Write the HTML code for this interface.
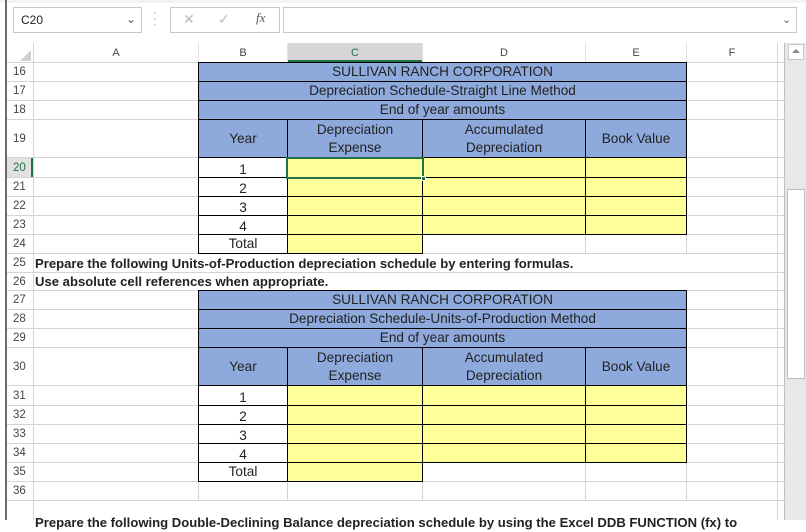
<!DOCTYPE html>
<html><head><meta charset="utf-8">
<style>
*{margin:0;padding:0;box-sizing:border-box}
body{width:806px;height:520px;overflow:hidden;background:#fff;font-family:"Liberation Sans",sans-serif;position:relative;color:#222}
.a{position:absolute}
.v{position:absolute;width:1px;background:#d4d4d4}
.h{position:absolute;height:1px;background:#d4d4d4}
.c{position:absolute;border:1px solid #000;display:flex;align-items:center;justify-content:center;text-align:center;font-size:13.6px;line-height:18px;color:#222;white-space:nowrap}
.b{background:#8ea9db}
.y{background:#ffff99}
.w{background:#fff}
.rn{position:absolute;left:8px;width:25px;font-size:11.5px;color:#444;padding-left:5px;display:flex;align-items:center}
.ch{position:absolute;top:43px;height:19px;font-size:11px;color:#444;display:flex;align-items:center;justify-content:center}
.bt{position:absolute;left:35px;font-size:13.1px;font-weight:bold;line-height:18px;color:#222;white-space:nowrap}
</style></head><body>
<div class="a" style="left:0;top:0;width:806px;height:3px;background:#f3f3f3"></div>
<div class="a" style="left:5px;top:0;width:2px;height:520px;background:#6b6b6b"></div>
<div class="a" style="left:13px;top:7px;width:129px;height:26px;border:1px solid #c6c6c6;font-size:12px;padding:5px 0 0 7px;color:#222">C20</div>
<div class="a" style="left:126px;top:12px;font-size:12px;color:#555">&#8964;</div>
<div class="a" style="left:153px;top:10px;font-size:11px;color:#999;line-height:6px">&middot;<br>&middot;<br>&middot;</div>
<div class="a" style="left:170px;top:7px;width:110px;height:26px;border:1px solid #c6c6c6"></div>
<div class="a" style="left:183px;top:11px;font-size:14px;color:#bbb">&#10005;</div>
<div class="a" style="left:218px;top:11px;font-size:14px;color:#bbb">&#10003;</div>
<div class="a" style="left:256px;top:10px;font-size:13px;color:#555;font-family:'Liberation Serif',serif;font-style:italic">fx</div>
<div class="a" style="left:283px;top:7px;width:514px;height:26px;border:1px solid #c6c6c6"></div>
<div class="a" style="left:782px;top:13px;font-size:11px;color:#666">&#8964;</div>

<div class="a" style="left:7px;top:43px;width:778px;height:20px;background:#fff;border-bottom:1px solid #d4d4d4"></div>
<div class="a" style="left:287px;top:43px;width:136px;height:19px;background:#d6d6d6;border-bottom:2px solid #217346"></div>
<div class="a" style="left:20px;top:50px;width:0;height:0;border-left:11px solid transparent;border-bottom:11px solid #d0d0d0"></div>
<div class="ch" style="left:34px;width:164px">A</div>
<div class="ch" style="left:199px;width:88px">B</div>
<div class="ch" style="left:288px;width:134px;color:#217346">C</div>
<div class="ch" style="left:423px;width:162px">D</div>
<div class="ch" style="left:586px;width:100px">E</div>
<div class="ch" style="left:687px;width:90px">F</div>
<div class="v" style="left:33px;top:43px;height:477px"></div>
<div class="v" style="left:198px;top:43px;height:20px;background:#e2e2e2"></div>
<div class="v" style="left:287px;top:43px;height:20px;background:#e2e2e2"></div>
<div class="v" style="left:422px;top:43px;height:20px;background:#e2e2e2"></div>
<div class="v" style="left:585px;top:43px;height:20px;background:#e2e2e2"></div>
<div class="v" style="left:686px;top:43px;height:20px;background:#e2e2e2"></div>
<div class="v" style="left:777px;top:43px;height:477px"></div>
<div class="v" style="left:784px;top:43px;height:477px;background:#bdbdbd"></div>

<div class="v" style="left:198px;top:62px;height:458px"></div>
<div class="v" style="left:287px;top:62px;height:458px"></div>
<div class="v" style="left:422px;top:62px;height:458px"></div>
<div class="v" style="left:585px;top:62px;height:458px"></div>
<div class="v" style="left:686px;top:62px;height:458px"></div>

<div class="h" style="left:7px;top:81px;width:778px"></div>
<div class="h" style="left:7px;top:100px;width:778px"></div>
<div class="h" style="left:7px;top:119px;width:778px"></div>
<div class="h" style="left:7px;top:157px;width:778px"></div>
<div class="h" style="left:7px;top:177px;width:778px"></div>
<div class="h" style="left:7px;top:196px;width:778px"></div>
<div class="h" style="left:7px;top:215px;width:778px"></div>
<div class="h" style="left:7px;top:234px;width:778px"></div>
<div class="h" style="left:7px;top:253px;width:778px"></div>
<div class="h" style="left:7px;top:272px;width:778px"></div>
<div class="h" style="left:7px;top:290px;width:778px"></div>
<div class="h" style="left:7px;top:309px;width:778px"></div>
<div class="h" style="left:7px;top:328px;width:778px"></div>
<div class="h" style="left:7px;top:347px;width:778px"></div>
<div class="h" style="left:7px;top:385px;width:778px"></div>
<div class="h" style="left:7px;top:405px;width:778px"></div>
<div class="h" style="left:7px;top:424px;width:778px"></div>
<div class="h" style="left:7px;top:443px;width:778px"></div>
<div class="h" style="left:7px;top:462px;width:778px"></div>
<div class="h" style="left:7px;top:481px;width:778px"></div>
<div class="h" style="left:7px;top:500px;width:778px"></div>

<div class="rn" style="top:63px;height:18px">16</div>
<div class="rn" style="top:82px;height:18px">17</div>
<div class="rn" style="top:101px;height:18px">18</div>
<div class="rn" style="top:120px;height:37px">19</div>
<div class="a" style="left:7px;top:158px;width:26px;height:19px;background:#e1e1e1;border-right:2px solid #217346"></div>
<div class="rn" style="top:158px;height:19px;color:#217346">20</div>
<div class="rn" style="top:178px;height:18px">21</div>
<div class="rn" style="top:197px;height:18px">22</div>
<div class="rn" style="top:216px;height:18px">23</div>
<div class="rn" style="top:235px;height:18px">24</div>
<div class="rn" style="top:254px;height:18px">25</div>
<div class="rn" style="top:273px;height:17px">26</div>
<div class="rn" style="top:291px;height:18px">27</div>
<div class="rn" style="top:310px;height:18px">28</div>
<div class="rn" style="top:329px;height:18px">29</div>
<div class="rn" style="top:348px;height:37px">30</div>
<div class="rn" style="top:386px;height:19px">31</div>
<div class="rn" style="top:406px;height:18px">32</div>
<div class="rn" style="top:425px;height:18px">33</div>
<div class="rn" style="top:444px;height:18px">34</div>
<div class="rn" style="top:463px;height:18px">35</div>
<div class="rn" style="top:482px;height:18px">36</div>

<div class="c b" style="left:198px;top:62px;width:489px;height:20px">SULLIVAN RANCH CORPORATION</div>
<div class="c b" style="left:198px;top:81px;width:489px;height:20px">Depreciation Schedule-Straight Line Method</div>
<div class="c b" style="left:198px;top:100px;width:489px;height:20px">End of year amounts</div>
<div class="c b" style="left:198px;top:119px;width:90px;height:39px">Year</div>
<div class="c b" style="left:287px;top:119px;width:136px;height:39px">Depreciation<br>Expense</div>
<div class="c b" style="left:422px;top:119px;width:164px;height:39px">Accumulated<br>Depreciation</div>
<div class="c b" style="left:585px;top:119px;width:102px;height:39px">Book Value</div>
<div class="c w" style="left:198px;top:157px;width:90px;height:21px;padding-top:4px">1</div>
<div class="c y" style="left:287px;top:157px;width:136px;height:21px"></div>
<div class="c y" style="left:422px;top:157px;width:164px;height:21px"></div>
<div class="c y" style="left:585px;top:157px;width:102px;height:21px"></div>
<div class="c w" style="left:198px;top:177px;width:90px;height:20px;padding-top:4px">2</div>
<div class="c y" style="left:287px;top:177px;width:136px;height:20px"></div>
<div class="c y" style="left:422px;top:177px;width:164px;height:20px"></div>
<div class="c y" style="left:585px;top:177px;width:102px;height:20px"></div>
<div class="c w" style="left:198px;top:196px;width:90px;height:20px;padding-top:4px">3</div>
<div class="c y" style="left:287px;top:196px;width:136px;height:20px"></div>
<div class="c y" style="left:422px;top:196px;width:164px;height:20px"></div>
<div class="c y" style="left:585px;top:196px;width:102px;height:20px"></div>
<div class="c w" style="left:198px;top:215px;width:90px;height:20px;padding-top:4px">4</div>
<div class="c y" style="left:287px;top:215px;width:136px;height:20px"></div>
<div class="c y" style="left:422px;top:215px;width:164px;height:20px"></div>
<div class="c y" style="left:585px;top:215px;width:102px;height:20px"></div>
<div class="c w" style="left:198px;top:234px;width:90px;height:20px">Total</div>
<div class="c y" style="left:287px;top:234px;width:136px;height:20px"></div>
<div class="a" style="left:286px;top:157px;width:138px;height:22px;border:2px solid #217346"></div>
<div class="a" style="left:421px;top:176px;width:5px;height:5px;background:#217346;border:1px solid #fff"></div>

<div class="a" style="left:34px;top:254px;width:743px;height:18px;background:#fff"></div>
<div class="a" style="left:34px;top:273px;width:743px;height:17px;background:#fff"></div>
<div class="bt" style="top:255px">Prepare the following Units-of-Production depreciation schedule by entering formulas.</div>
<div class="bt" style="top:273px">Use absolute cell references when appropriate.</div>

<div class="c b" style="left:198px;top:290px;width:489px;height:20px">SULLIVAN RANCH CORPORATION</div>
<div class="c b" style="left:198px;top:309px;width:489px;height:20px">Depreciation Schedule-Units-of-Production Method</div>
<div class="c b" style="left:198px;top:328px;width:489px;height:20px">End of year amounts</div>
<div class="c b" style="left:198px;top:347px;width:90px;height:39px">Year</div>
<div class="c b" style="left:287px;top:347px;width:136px;height:39px">Depreciation<br>Expense</div>
<div class="c b" style="left:422px;top:347px;width:164px;height:39px">Accumulated<br>Depreciation</div>
<div class="c b" style="left:585px;top:347px;width:102px;height:39px">Book Value</div>
<div class="c w" style="left:198px;top:385px;width:90px;height:21px;padding-top:4px">1</div>
<div class="c y" style="left:287px;top:385px;width:136px;height:21px"></div>
<div class="c y" style="left:422px;top:385px;width:164px;height:21px"></div>
<div class="c y" style="left:585px;top:385px;width:102px;height:21px"></div>
<div class="c w" style="left:198px;top:405px;width:90px;height:20px;padding-top:4px">2</div>
<div class="c y" style="left:287px;top:405px;width:136px;height:20px"></div>
<div class="c y" style="left:422px;top:405px;width:164px;height:20px"></div>
<div class="c y" style="left:585px;top:405px;width:102px;height:20px"></div>
<div class="c w" style="left:198px;top:424px;width:90px;height:20px;padding-top:4px">3</div>
<div class="c y" style="left:287px;top:424px;width:136px;height:20px"></div>
<div class="c y" style="left:422px;top:424px;width:164px;height:20px"></div>
<div class="c y" style="left:585px;top:424px;width:102px;height:20px"></div>
<div class="c w" style="left:198px;top:443px;width:90px;height:20px;padding-top:4px">4</div>
<div class="c y" style="left:287px;top:443px;width:136px;height:20px"></div>
<div class="c y" style="left:422px;top:443px;width:164px;height:20px"></div>
<div class="c y" style="left:585px;top:443px;width:102px;height:20px"></div>
<div class="c w" style="left:198px;top:462px;width:90px;height:20px">Total</div>
<div class="c y" style="left:287px;top:462px;width:136px;height:20px"></div>

<div class="a" style="left:34px;top:501px;width:743px;height:19px;background:#fff"></div>
<div class="bt" style="top:514px">Prepare the following Double-Declining Balance depreciation schedule by using the Excel DDB FUNCTION (fx) to</div>

<div class="a" style="left:785px;top:43px;width:21px;height:477px;background:#e8e8e8"></div>
<div class="a" style="left:788px;top:44px;width:16px;height:16px;background:#fff;border:1px solid #c8c8c8"></div>
<div class="a" style="left:792px;top:49px;width:0;height:0;border-left:4px solid transparent;border-right:4px solid transparent;border-bottom:4px solid #888"></div>
<div class="a" style="left:787px;top:189px;width:18px;height:190px;background:#fff;border:1px solid #bdbdbd"></div>
</body></html>
